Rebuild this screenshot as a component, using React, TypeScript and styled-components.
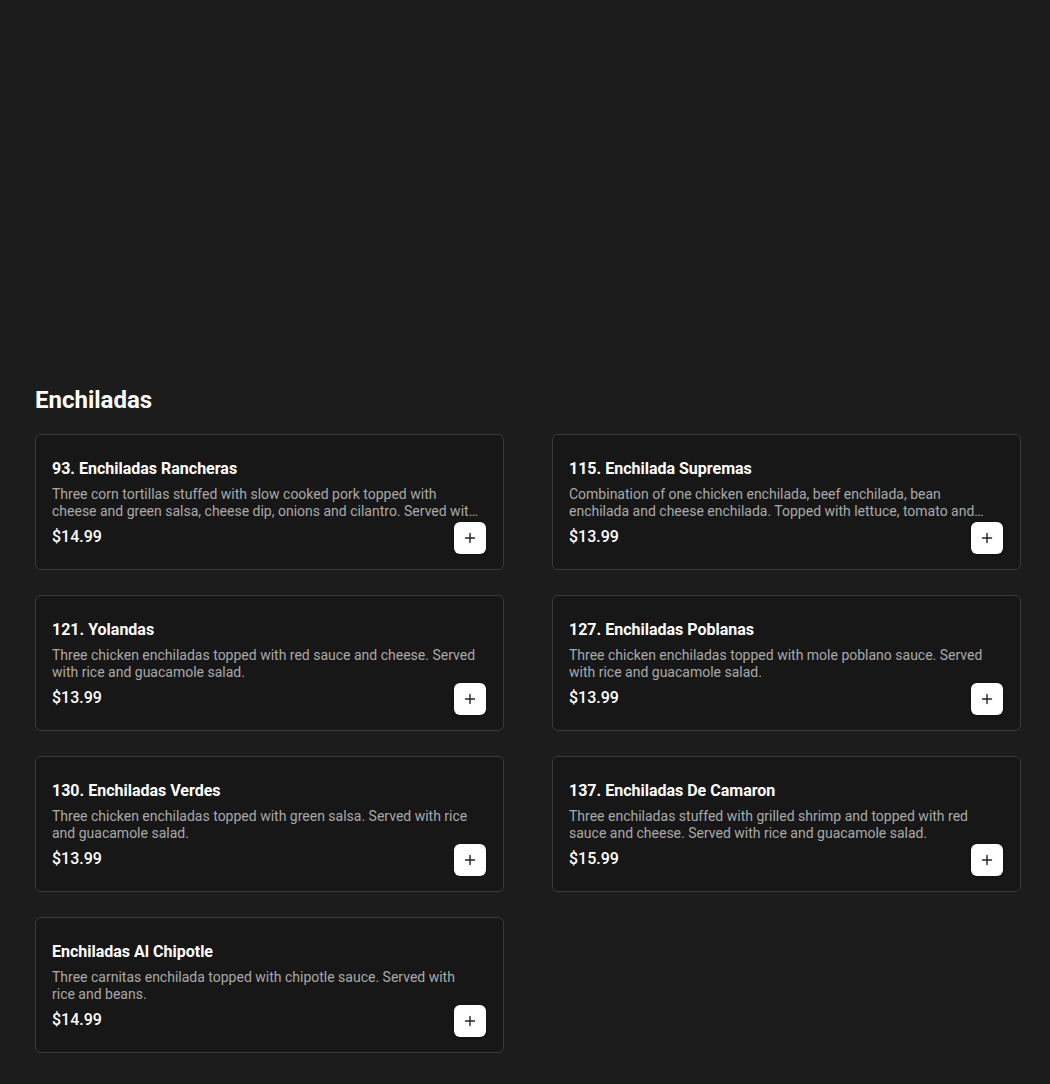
import * as React from 'react';
import styled, { createGlobalStyle } from 'styled-components';

const GlobalStyle = createGlobalStyle`
    html, body {
        margin: 0;
        padding: 0;
        background: #1c1c1c;
        font-family: Roboto, "Liberation Sans", Arial, sans-serif;
    }
`;

const items = [
    { id: 93, name: '93. Enchiladas Rancheras', price: '$14.99', description: 'Three corn tortillas stuffed with slow cooked pork topped with cheese and green salsa, cheese dip, onions and cilantro. Served with rice and beans.' },
    { id: 115, name: '115. Enchilada Supremas', price: '$13.99', description: 'Combination of one chicken enchilada, beef enchilada, bean enchilada and cheese enchilada. Topped with lettuce, tomato and sour cream. Served with rice and beans.' },
    { id: 121, name: '121. Yolandas', price: '$13.99', description: 'Three chicken enchiladas topped with red sauce and cheese. Served with rice and guacamole salad.' },
    { id: 127, name: '127. Enchiladas Poblanas', price: '$13.99', description: 'Three chicken enchiladas topped with mole poblano sauce. Served with rice and guacamole salad.' },
    { id: 130, name: '130. Enchiladas Verdes', price: '$13.99', description: 'Three chicken enchiladas topped with green salsa. Served with rice and guacamole salad.' },
    { id: 137, name: '137. Enchiladas De Camaron', price: '$15.99', description: 'Three enchiladas stuffed with grilled shrimp and topped with red sauce and cheese. Served with rice and guacamole salad.' },
    { id: 200, name: 'Enchiladas Al Chipotle', price: '$14.99', description: 'Three carnitas enchilada topped with chipotle sauce. Served with rice and beans.' },
];

const Page = styled.div`
    min-height: 1084px;
    background: #1c1c1c;
`;

// empty hero area above the menu section
const Banner = styled.div`
    height: 384px;
`;

const Section = styled.section`
    padding: 0 29px 31px 35px;
`;

const SectionTitle = styled.h2`
    margin: 0 0 18px;
    font-size: 24px;
    line-height: 32px;
    font-weight: 700;
    color: #ffffff;
`;

const Grid = styled.div`
    display: grid;
    grid-template-columns: 1fr 1fr;
    column-gap: 48px;
    row-gap: 25px;
`;

const Card = styled.div`
    box-sizing: border-box;
    height: 136px;
    display: flex;
    align-items: flex-end;
    padding: 22px 17px 15px 16px;
    background: #171717;
    border: 1px solid #3a3a3a;
    border-radius: 6px;
`;

const Info = styled.div`
    flex: 1;
    min-width: 0;
    align-self: stretch;
    display: flex;
    flex-direction: column;
`;

const Name = styled.div`
    font-size: 16px;
    line-height: 24px;
    font-weight: 700;
    color: #ffffff;
`;

const Description = styled.div`
    margin-top: 5px;
    max-width: 427px;
    font-size: 14px;
    line-height: 17px;
    color: #a9a9a9;
    display: -webkit-box;
    -webkit-line-clamp: 2;
    -webkit-box-orient: vertical;
    overflow: hidden;
    height: 34px;
`;

const Price = styled.div`
    margin-top: 5px;
    font-size: 16px;
    line-height: 24px;
    font-weight: 500;
    color: #ffffff;
`;

const AddButton = styled.button`
    flex: none;
    width: 32px;
    height: 32px;
    margin-left: -32px;
    display: flex;
    align-items: center;
    justify-content: center;
    padding: 0;
    border: none;
    border-radius: 6px;
    background: #ffffff;
    box-shadow: 0 1px 3px rgba(0, 0, 0, 0.4);
    cursor: pointer;
`;

const PlusIcon = () => (
    <svg width="12" height="12" viewBox="0 0 12 12" fill="none">
        <path d="M6 1.5v9M1.5 6h9" stroke="#222" strokeWidth="1.4" strokeLinecap="round" />
    </svg>
);

export default function App() {
    return (
        <Page>
            <GlobalStyle />
            <Banner />
            <Section>
                <SectionTitle>Enchiladas</SectionTitle>
                <Grid>
                    {items.map((item) => (
                        <Card key={item.id}>
                            <Info>
                                <Name>{item.name}</Name>
                                <Description>{item.description}</Description>
                                <Price>{item.price}</Price>
                            </Info>
                            <AddButton aria-label="Add">
                                <PlusIcon />
                            </AddButton>
                        </Card>
                    ))}
                </Grid>
            </Section>
        </Page>
    );
}
